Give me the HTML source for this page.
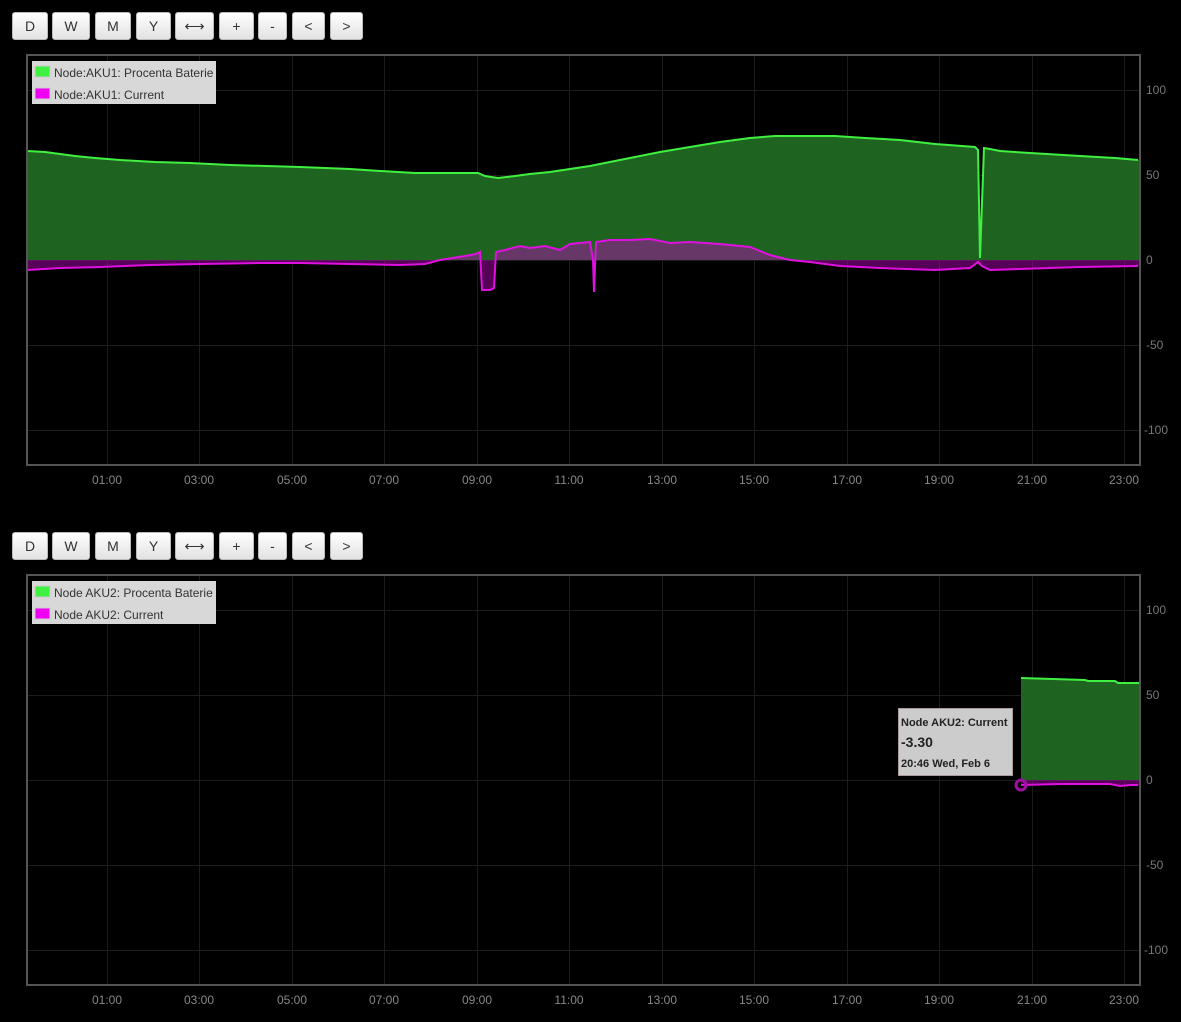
<!DOCTYPE html>
<html><head><style>
body{margin:0;background:#000;width:1181px;height:1022px;overflow:hidden;font-family:"Liberation Sans",sans-serif;position:relative}
.b{position:absolute;height:28px;border:1px solid #bbb;border-radius:3px;background:linear-gradient(#fff,#e2e2e2);box-sizing:border-box;font-size:14px;color:#333;text-align:center;line-height:27px}
svg{position:absolute;left:0}
</style></head><body>
<script>
var bs=[[12,36,'D'],[52,38,'W'],[95,36,'M'],[136,35,'Y'],[175,39,'⟷'],[219,35,'+'],[258,29,'-'],[292,33,'&lt;'],[330,33,'&gt;']];
var h='';[12,532].forEach(function(t){bs.forEach(function(b){h+='<div class="b" style="left:'+b[0]+'px;top:'+t+'px;width:'+b[1]+'px">'+b[2]+'</div>';});});
document.write(h);
</script>
<svg width="1181" height="1022" style="top:0" font-family="Liberation Sans, sans-serif">
<defs><clipPath id="c1"><rect x="27" y="55" width="1113" height="410"/></clipPath>
<clipPath id="c2"><rect x="27" y="575" width="1113" height="410"/></clipPath></defs>
<g id="grid1" stroke="#1c1c1c" stroke-width="1">
<line x1="27" x2="1140" y1="90.5" y2="90.5"/><line x1="27" x2="1140" y1="175.5" y2="175.5"/><line x1="27" x2="1140" y1="260.5" y2="260.5"/><line x1="27" x2="1140" y1="345.5" y2="345.5"/><line x1="27" x2="1140" y1="430.5" y2="430.5"/>
<line y1="55" y2="465" x1="107.5" x2="107.5"/><line y1="55" y2="465" x1="199.5" x2="199.5"/><line y1="55" y2="465" x1="292.5" x2="292.5"/><line y1="55" y2="465" x1="384.5" x2="384.5"/><line y1="55" y2="465" x1="477.5" x2="477.5"/><line y1="55" y2="465" x1="569.5" x2="569.5"/><line y1="55" y2="465" x1="662.5" x2="662.5"/><line y1="55" y2="465" x1="754.5" x2="754.5"/><line y1="55" y2="465" x1="847.5" x2="847.5"/><line y1="55" y2="465" x1="939.5" x2="939.5"/><line y1="55" y2="465" x1="1032.5" x2="1032.5"/><line y1="55" y2="465" x1="1124.5" x2="1124.5"/>
</g>
<use href="#grid1" y="520"/>
<g clip-path="url(#c1)">
<path fill="#1e6420" d="M27,260 L27,151 45,152 60,154 75,156 95,158 120,160 155,162 190,163 230,165 300,167 350,169 380,171 415,173 478,173 485,176 498,178 515,176 530,174 550,172 570,169 590,166 610,162 630,158 660,152 690,147 720,142 750,138 775,136 835,136 865,138 900,140 935,144 975,147 978,150 980,258 984,148 990,149 1000,151 1030,153 1080,156 1115,158 1138,160 1140,160 1140,260Z"/>
<path fill="none" stroke="#40f040" stroke-width="2" d="M27,151 45,152 60,154 75,156 95,158 120,160 155,162 190,163 230,165 300,167 350,169 380,171 415,173 478,173 485,176 498,178 515,176 530,174 550,172 570,169 590,166 610,162 630,158 660,152 690,147 720,142 750,138 775,136 835,136 865,138 900,140 935,144 975,147 978,150 980,258 984,148 990,149 1000,151 1030,153 1080,156 1115,158 1138,160"/>
<path fill="#c000c0" fill-opacity="0.45" d="M27,260 L27,270 60,268 100,267 150,265 200,264 260,263 300,263 350,264 400,265 425,264 440,260 465,256 476,254 480,252 482,290 490,290 494,288 496,252 505,250 520,246 530,248 545,246 560,250 570,244 590,242 593,260 594,292 596,242 610,240 630,240 650,239 670,243 690,242 720,244 750,247 770,255 790,260 810,262 840,266 880,268 935,270 970,268 978,262 982,266 990,270 1020,269 1080,267 1138,266 1140,266 1140,260Z"/>
<path fill="none" stroke="#e010e0" stroke-width="2" d="M27,270 60,268 100,267 150,265 200,264 260,263 300,263 350,264 400,265 425,264 440,260 465,256 476,254 480,252 482,290 490,290 494,288 496,252 505,250 520,246 530,248 545,246 560,250 570,244 590,242 593,260 594,292 596,242 610,240 630,240 650,239 670,243 690,242 720,244 750,247 770,255 790,260 810,262 840,266 880,268 935,270 970,268 978,262 982,266 990,270 1020,269 1080,267 1138,266"/>
</g>
<g clip-path="url(#c2)">
<path fill="#1e6420" d="M1021,780 L1021,678 1085,680 1088,681 1115,681 1118,683 1140,683 1140,780Z"/>
<path fill="none" stroke="#40f040" stroke-width="2" d="M1021,678 1085,680 1088,681 1115,681 1118,683 1140,683"/>
<path fill="#c000c0" fill-opacity="0.45" d="M1021,780 L1021,785 1060,784 1110,784 1120,786 1130,785 1140,785 1140,780Z"/>
<path fill="none" stroke="#e010e0" stroke-width="2" d="M1021,785 1060,784 1110,784 1120,786 1130,785 1138,785"/>
</g>
<circle cx="1021" cy="785" r="5" fill="none" stroke="#a010a0" stroke-width="3"/>
<rect x="27" y="55" width="1113" height="410" fill="none" stroke="#555" stroke-width="2"/>
<rect x="27" y="575" width="1113" height="410" fill="none" stroke="#555" stroke-width="2"/>
<g font-size="12" fill="#777">
<text x="1146" y="94">100</text><text x="1146" y="179">50</text><text x="1146" y="264">0</text><text x="1146" y="349">-50</text><text x="1144" y="434">-100</text>
<text x="1146" y="614">100</text><text x="1146" y="699">50</text><text x="1146" y="784">0</text><text x="1146" y="869">-50</text><text x="1144" y="954">-100</text>
</g>
<g font-size="12" fill="#888" text-anchor="middle">
<g id="xl"><text x="107" y="484">01:00</text><text x="199" y="484">03:00</text><text x="292" y="484">05:00</text><text x="384" y="484">07:00</text><text x="477" y="484">09:00</text><text x="569" y="484">11:00</text><text x="662" y="484">13:00</text><text x="754" y="484">15:00</text><text x="847" y="484">17:00</text><text x="939" y="484">19:00</text><text x="1032" y="484">21:00</text><text x="1124" y="484">23:00</text></g>
<use href="#xl" y="520"/>
</g>
<g font-size="12" fill="#333">
<rect x="32" y="61" width="184" height="43" fill="#d8d8d8"/>
<rect x="35" y="66" width="15" height="11" fill="#40f040" stroke="#ccc"/><rect x="35" y="88" width="15" height="11" fill="#f000f0" stroke="#ccc"/>
<text x="54" y="77">Node:AKU1: Procenta Baterie</text><text x="54" y="99">Node:AKU1: Current</text>
<rect x="32" y="581" width="184" height="43" fill="#d8d8d8"/>
<rect x="35" y="586" width="15" height="11" fill="#40f040" stroke="#ccc"/><rect x="35" y="608" width="15" height="11" fill="#f000f0" stroke="#ccc"/>
<text x="54" y="597">Node AKU2: Procenta Baterie</text><text x="54" y="619">Node AKU2: Current</text>
</g>
<rect x="898.5" y="708.5" width="114" height="67" fill="#cccccc" stroke="#aa9a9a"/>
<g fill="#222" font-weight="bold"><text x="901" y="726" font-size="11">Node AKU2: Current</text><text x="901" y="747" font-size="14">-3.30</text><text x="901" y="767" font-size="11">20:46 Wed, Feb 6</text></g>
</svg>
</body></html>
